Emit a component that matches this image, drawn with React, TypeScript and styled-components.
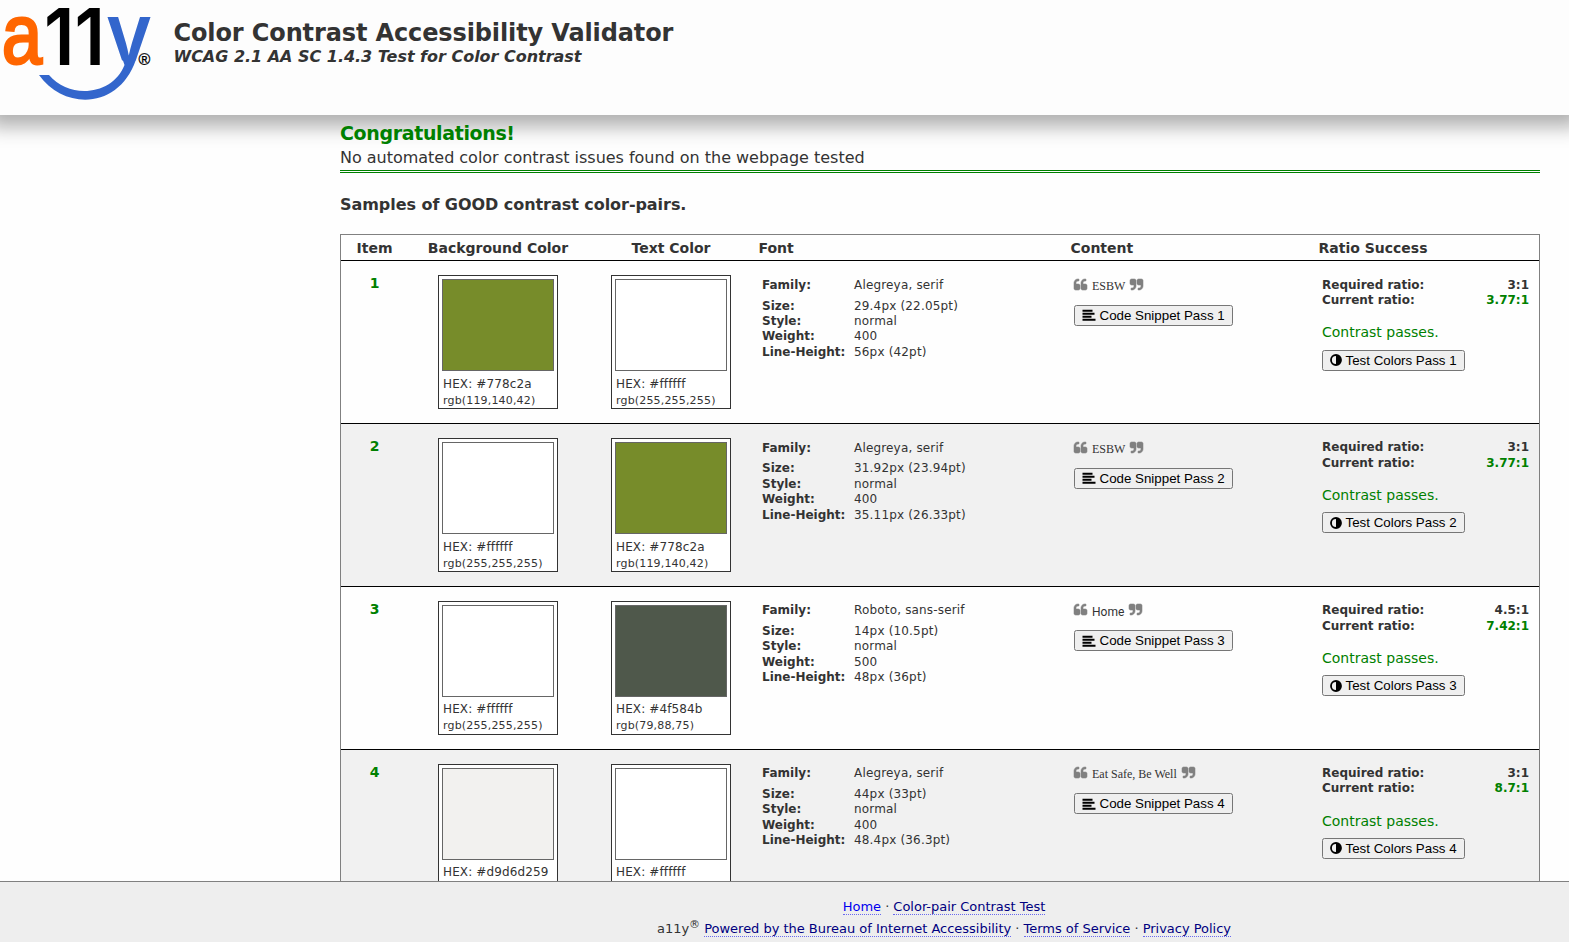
import React from "react";
import styled, { createGlobalStyle } from "styled-components";

const Global = createGlobalStyle`
  *, *::before, *::after { box-sizing: border-box; }
  html, body { margin: 0; padding: 0; height: 100%; overflow: hidden; }
  body { background: #fefefe; color: #333; font-family: Verdana, "DejaVu Sans", sans-serif; font-size: 13px; }
  h1, h2, p { margin: 0; }
`;

const Page = styled.div`
  height: 942px;
  display: flex;
  flex-direction: column;
  overflow: hidden;
`;

const Header = styled.header`
  flex: none;
  height: 115px;
  display: flex;
  background: #fdfdfd;
  box-shadow: 0 1px 18px 11px #b0b0b0;
  position: relative;
`;

const Logo = styled.svg`
  display: block;
  flex: none;
  width: 160px;
  height: 110px;
  overflow: visible;
  text { font-family: Inter, "Liberation Sans", sans-serif; }
`;

const PlainGlyph = styled.text`
  && { font-family: "Liberation Sans", Arial, sans-serif; }
`;

const Titles = styled.div`
  padding: 18px 0 0 13.5px;
`;

const Title = styled.h1`
  font-size: 24px;
  line-height: 30px;
  letter-spacing: -0.12px;
  white-space: nowrap;
`;

const Subtitle = styled.p`
  font-size: 16px;
  line-height: 18px;
  letter-spacing: -0.02px;
  font-weight: bold;
  font-style: italic;
  white-space: nowrap;
`;

const Main = styled.main`
  flex: 1;
  min-height: 0;
  overflow: hidden;
  margin-left: 340px;
  width: 1200px;
  position: relative;
`;

const Result = styled.section`
  height: 58px;
  padding-top: 6px;
  border-bottom: 3px double green;
`;

const ResultTitle = styled.h2`
  font-size: 19px;
  line-height: 25px;
  letter-spacing: -0.36px;
  color: green;
`;

const ResultText = styled.p`
  font-size: 16px;
  line-height: 24px;
  letter-spacing: -0.02px;
`;

const SamplesTitle = styled.p`
  font-size: 16px;
  font-weight: bold;
  line-height: 20px;
  letter-spacing: -0.05px;
  padding: 22px 0 19px;
`;

const Table = styled.div`
  border: 1px solid #808080;
`;

const Row = styled.div<{ $shade?: boolean }>`
  display: grid;
  grid-template-columns: 67px 180px 166px 312px 248px 225px;
  height: 162.75px;
  border-bottom: 1px solid #000;
  background: ${(p) => (p.$shade ? "#f1f1f1" : "transparent")};
`;

const HeadRow = styled(Row)`
  height: 26.35px;
  font-size: 14px;
  font-weight: bold;
  line-height: 26.5px;
`;

const HeadCell = styled.div<{ $center?: boolean }>`
  text-align: ${(p) => (p.$center ? "center" : "left")};
  padding-left: ${(p) => (p.$center ? 0 : 4.5)}px;
  white-space: nowrap;
`;

const ItemNumber = styled.div`
  padding-top: 13px;
  text-align: center;
  font-size: 14px;
  line-height: 18px;
  font-weight: bold;
  color: green;
`;

const SwatchCell = styled.div`
  display: flex;
  justify-content: center;
  align-items: flex-start;
  padding-top: 14.05px;
`;

const Swatch = styled.div`
  width: 120px;
  height: 134px;
  border: 1px solid #333;
  background: #fff;
  padding: 3px;
`;

const Chip = styled.div<{ $color: string }>`
  height: 92px;
  border: 1px solid #666;
  background: ${(p) => p.$color};
  margin-bottom: 4.6px;
`;

const Hex = styled.div`
  font-size: 12px;
  line-height: 17px;
  padding-left: 1px;
  letter-spacing: 0.12px;
  white-space: nowrap;
`;

const Rgb = styled(Hex)`
  font-size: 11px;
  line-height: 15px;
  letter-spacing: 0.17px;
`;

const FontCell = styled.dl`
  margin: 0;
  padding: 16.6px 0 0 8px;
  font-size: 12px;
`;

const FontLine = styled.div<{ $first?: boolean }>`
  display: grid;
  grid-template-columns: 92px 1fr;
  line-height: 15.4px;
  padding-bottom: ${(p) => (p.$first ? 5.2 : 0)}px;
  dt { font-weight: bold; white-space: nowrap; }
  dd { margin: 0; white-space: nowrap; letter-spacing: 0.17px; }
`;

const ContentCell = styled.div`
  padding: 15px 0 0 8px;
`;

const Quote = styled.div<{ $family: string }>`
  display: flex;
  align-items: center;
  gap: 5px;
  height: 18px;
  font-family: ${(p) => p.$family};
  font-size: 12px;
  span { padding-top: 2px; }
`;

const MarkIcon = styled.svg<{ $flip?: boolean }>`
  width: 13px;
  height: 11px;
  margin-top: -2px;
  overflow: visible;
  fill: #808080;
  stroke: #808080;
  stroke-width: 70;
  transform: ${(p) => (p.$flip ? "rotate(180deg)" : "none")};
`;

const Button = styled.button`
  display: flex;
  align-items: center;
  gap: 3.5px;
  height: 21px;
  padding: 0 7px;
  border: 1px solid #767676;
  border-radius: 2.5px;
  background: #efefef;
  color: #000;
  font: 13.333px "Liberation Sans", Arial, sans-serif;
  white-space: nowrap;
`;

const SnippetButton = styled(Button)`
  margin-top: 10.55px;
`;

const RatioCell = styled.div`
  padding: 16.2px 10px 0 8px;
`;

const RatioLine = styled.div<{ $good?: boolean }>`
  display: flex;
  justify-content: space-between;
  font-size: 12px;
  font-weight: bold;
  line-height: 15.6px;
  b { color: ${(p) => (p.$good ? "green" : "inherit")}; }
`;

const Verdict = styled.p`
  margin: 14.6px 0 8.25px;
  color: green;
  font-size: 14px;
  line-height: 18px;
`;

const Footer = styled.footer`
  flex: none;
  height: 61px;
  border-top: 1px solid #808080;
  background: #eee;
  padding: 14px 0 0 319px;
  text-align: center;
  font-size: 13px;
  line-height: 22px;
  letter-spacing: -0.02px;
  sup { font-size: 11px; line-height: 0; }
`;

const Link = styled.a<{ $fresh?: boolean }>`
  color: ${(p) => (p.$fresh ? "#0000ee" : "#000080")};
  border-bottom: 1px dotted #6a6aee;
  text-decoration: none;
`;

type Color = { hex: string; rgb: string; fill?: string };
type Sample = {
  bg: Color;
  fg: Color;
  family: string;
  size: string;
  weight: string;
  lineHeight: string;
  content: string;
  required: string;
  current: string;
};

const white: Color = { hex: "#ffffff", rgb: "255,255,255" };
const olive: Color = { hex: "#778c2a", rgb: "119,140,42" };

const samples: Sample[] = [
  { bg: olive, fg: white, family: "Alegreya, serif", size: "29.4px (22.05pt)", weight: "400", lineHeight: "56px (42pt)", content: "ESBW", required: "3:1", current: "3.77:1" },
  { bg: white, fg: olive, family: "Alegreya, serif", size: "31.92px (23.94pt)", weight: "400", lineHeight: "35.11px (26.33pt)", content: "ESBW", required: "3:1", current: "3.77:1" },
  { bg: white, fg: { hex: "#4f584b", rgb: "79,88,75" }, family: "Roboto, sans-serif", size: "14px (10.5pt)", weight: "500", lineHeight: "48px (36pt)", content: "Home", required: "4.5:1", current: "7.42:1" },
  { bg: { hex: "#d9d6d259", rgb: "217,214,210", fill: "#f2f1ef" }, fg: white, family: "Alegreya, serif", size: "44px (33pt)", weight: "400", lineHeight: "48.4px (36.3pt)", content: "Eat Safe, Be Well", required: "3:1", current: "8.7:1" },
];

const mark =
  "M768 960v384q0 80-56 136t-136 56h-384q-80 0-136-56t-56-136v-704q0-104 40.5-198.5t109.5-163.5 163.5-109.5 198.5-40.5h64q26 0 45 19t19 45v128q0 26-19 45t-45 19h-64q-106 0-181 75t-75 181v32q0 40 28 68t68 28h224q80 0 136 56t56 136z";

function QuoteMark({ flip }: { flip?: boolean }) {
  return (
    <MarkIcon $flip={flip} viewBox="0 128 1664 1408" preserveAspectRatio="none">
      <path d={mark} />
      <path d={mark} transform="translate(896 0)" />
    </MarkIcon>
  );
}

function AlignIcon() {
  return (
    <svg width="14" height="12" viewBox="0 0 14 12">
      <path d="M.5 .8H10.5V2.7H.5ZM.5 3.8H12.5V5.7H.5ZM.5 6.8H9.5V8.7H.5ZM.5 9.800H13.5V11.700H.5Z" />
    </svg>
  );
}

function HalfCircleIcon() {
  return (
    <svg width="12" height="12" viewBox="0 0 12 12">
      <circle cx="6" cy="6" r="5" fill="none" stroke="#000" strokeWidth="1.8" />
      <path d="M6 1a5 5 0 0 1 0 10z" />
    </svg>
  );
}

function ColorSwatch({ color }: { color: Color }) {
  return (
    <SwatchCell>
      <Swatch>
        <Chip $color={color.fill ?? color.hex} />
        <Hex>HEX: {color.hex}</Hex>
        <Rgb>rgb({color.rgb})</Rgb>
      </Swatch>
    </SwatchCell>
  );
}

function SampleRow({ sample: s, n }: { sample: Sample; n: number }) {
  const family = s.family.startsWith("Roboto") ? "Roboto, sans-serif" : '"Liberation Serif", serif';
  return (
    <Row $shade={n % 2 === 0}>
      <ItemNumber>{n}</ItemNumber>
      <ColorSwatch color={s.bg} />
      <ColorSwatch color={s.fg} />
      <FontCell>
        <FontLine $first><dt>Family:</dt><dd>{s.family}</dd></FontLine>
        <FontLine><dt>Size:</dt><dd>{s.size}</dd></FontLine>
        <FontLine><dt>Style:</dt><dd>normal</dd></FontLine>
        <FontLine><dt>Weight:</dt><dd>{s.weight}</dd></FontLine>
        <FontLine><dt>Line-Height:</dt><dd>{s.lineHeight}</dd></FontLine>
      </FontCell>
      <ContentCell>
        <Quote $family={family}>
          <QuoteMark />
          <span>{s.content}</span>
          <QuoteMark flip />
        </Quote>
        <SnippetButton><AlignIcon />Code Snippet Pass {n}</SnippetButton>
      </ContentCell>
      <RatioCell>
        <RatioLine><span>Required ratio:</span><b>{s.required}</b></RatioLine>
        <RatioLine $good><span>Current ratio:</span><b>{s.current}</b></RatioLine>
        <Verdict>Contrast passes.</Verdict>
        <Button><HalfCircleIcon />Test Colors Pass {n}</Button>
      </RatioCell>
    </Row>
  );
}

export default function App() {
  return (
    <Page>
      <Global />
      <Header>
        <Logo viewBox="0 0 160 110" role="img" aria-label="a11y logo">
          <defs>
            <clipPath id="arms"><rect x="100" y="0" width="60" height="60.5" /></clipPath>
          </defs>
          <PlainGlyph x="2" y="62.5" fontSize="83" textLength="40" lengthAdjust="spacingAndGlyphs" fill="#ff6600" stroke="#ff6600" strokeWidth="3">a</PlainGlyph>
          <text x="44" y="65" fontSize="78" fontWeight="600" textLength="61" lengthAdjust="spacingAndGlyphs" fill="#000">11</text>
          <text x="106" y="65" fontSize="88" fontWeight="600" textLength="46" lengthAdjust="spacingAndGlyphs" fill="#3366cc" clipPath="url(#arms)">y</text>
          <path d="M39 75H49C70 100 113 95 124.500 65L122.800 60H135.800C119 109 65 111 39 75Z" fill="#3366cc" />
          <PlainGlyph x="138.500" y="64.500" fontSize="16" fill="#000" stroke="#000" strokeWidth="0.3">®</PlainGlyph>
        </Logo>
        <Titles>
          <Title>Color Contrast Accessibility Validator</Title>
          <Subtitle>WCAG 2.1 AA SC 1.4.3 Test for Color Contrast</Subtitle>
        </Titles>
      </Header>
      <Main>
        <Result>
          <ResultTitle>Congratulations!</ResultTitle>
          <ResultText>No automated color contrast issues found on the webpage tested</ResultText>
        </Result>
        <SamplesTitle>Samples of GOOD contrast color-pairs.</SamplesTitle>
        <Table>
          <HeadRow>
            <HeadCell $center>Item</HeadCell>
            <HeadCell $center>Background Color</HeadCell>
            <HeadCell $center>Text Color</HeadCell>
            <HeadCell>Font</HeadCell>
            <HeadCell>Content</HeadCell>
            <HeadCell>Ratio Success</HeadCell>
          </HeadRow>
          {samples.map((s, i) => <SampleRow key={i} sample={s} n={i + 1} />)}
        </Table>
      </Main>
      <Footer>
        <div><Link $fresh>Home</Link> · <Link>Color-pair Contrast Test</Link></div>
        <div>a11y<sup>®</sup> <Link>Powered by the Bureau of Internet Accessibility</Link> · <Link>Terms of Service</Link> · <Link>Privacy Policy</Link></div>
      </Footer>
    </Page>
  );
}
